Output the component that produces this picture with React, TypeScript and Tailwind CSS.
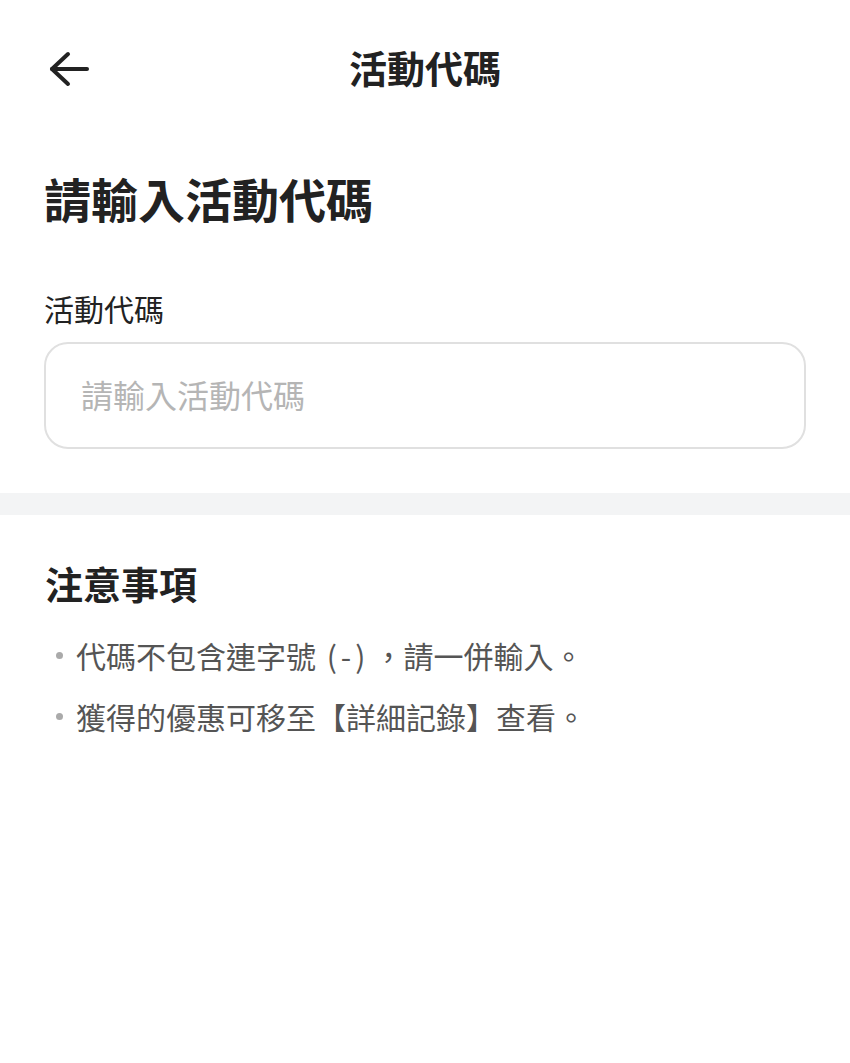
import { useState, type ReactNode } from 'react';

const font = { fontFamily: '"Noto Sans CJK TC", "Noto Sans", sans-serif' };

const notes: { id: string; body: ReactNode }[] = [
  {
    id: 'hyphen',
    body: (
      <>
        代碼不包含連字號 <span className="tracking-[4px] ml-[4px] mr-[4px]">(-)</span>，請一併輸入。
      </>
    ),
  },
  { id: 'record', body: '獲得的優惠可移至【詳細記錄】查看。' },
];

function BackArrow() {
  return (
    <svg width="40" height="36" viewBox="0 0 40 36" fill="none" stroke="#222" strokeWidth="4" strokeLinecap="round" strokeLinejoin="round">
      <path d="M38 18H3" />
      <path d="M19 3L3 18L19 33" />
    </svg>
  );
}

export default function App() {
  const [code, setCode] = useState('');

  return (
    <div className="min-h-screen bg-white text-[#222]" style={font}>
      <header className="h-[134px] grid grid-cols-[1fr_auto_1fr] items-center px-[49px]">
        <button type="button" className="justify-self-start mt-[4px]">
          <BackArrow />
        </button>
        <h1 className="text-[38px] font-bold leading-none">活動代碼</h1>
        <div />
      </header>

      <section className="px-[44px]">
        <h2 className="mt-[36px] text-[47px] font-bold leading-[56px]">請輸入活動代碼</h2>
        <label htmlFor="code" className="block mt-[62px] text-[30px] leading-[40px]">活動代碼</label>
        <input
          id="code"
          value={code}
          onChange={(e) => setCode(e.target.value)}
          placeholder="請輸入活動代碼"
          className="mt-[14px] w-full h-[107px] rounded-[24px] border-2 border-[#e0e0e0] px-[35px] pb-[3px] text-[32px] outline-none placeholder:text-[#b5b5b5]"
        />
      </section>

      <div className="mt-[44px] h-[22px] bg-[#f3f4f5]" />

      <section className="px-[45px]">
        <h3 className="mt-[44px] text-[38px] font-bold leading-[48px]">注意事項</h3>
        <ul className="mt-[28px] flex flex-col gap-[21px]">
          {notes.map((n) => (
            <li key={n.id} className="flex items-center text-[30px] leading-[40px] text-[#555]">
              <span className="ml-[11px] mr-[13px] w-[7px] h-[7px] rounded-full bg-[#aaa]" />
              <span>{n.body}</span>
            </li>
          ))}
        </ul>
      </section>
    </div>
  );
}
